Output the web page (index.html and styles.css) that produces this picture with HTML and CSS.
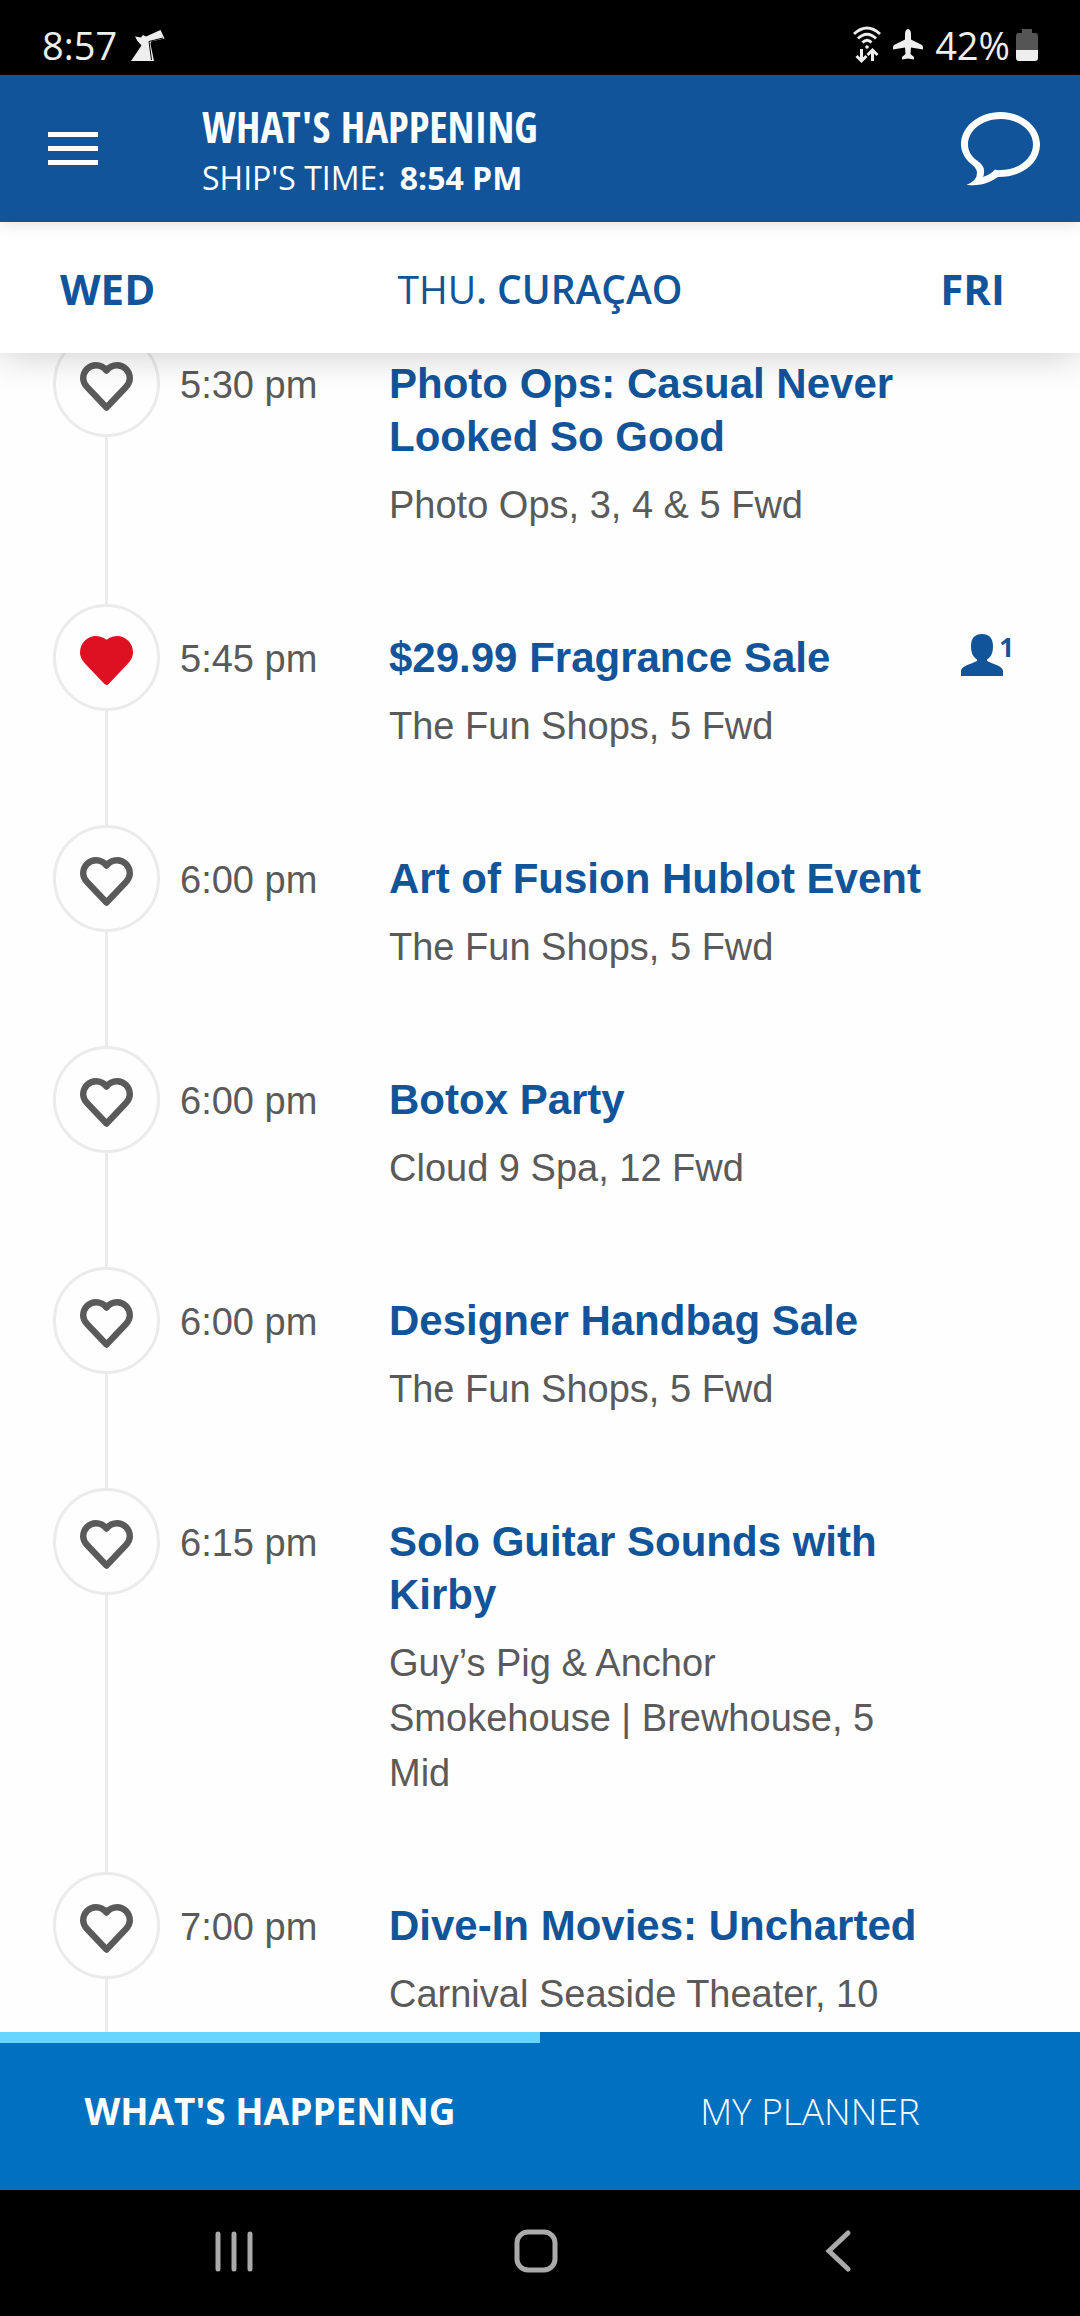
FILE: index.html
```html
<!DOCTYPE html>
<html lang="en">
<head>
<meta charset="utf-8">
<meta name="viewport" content="width=device-width, initial-scale=1">
<title>What's Happening</title>
<link rel="stylesheet" href="styles.css">
</head>
<body>
<svg class="sprite" aria-hidden="true">
  <symbol id="heart" viewBox="0 0 53 49"><path d="M26.500 45.500 7.500 25.500C4.500 22.500 3.200 20 3.200 16.500 3.200 9 9 3.200 16 3.200c4.500 0 8 2 10.500 5.300C29 5.200 32.500 3.200 37 3.200c7 0 12.800 5.800 12.800 13.300 0 3.500-1.300 6-4.300 9Z" stroke-width="6.400" stroke-linejoin="round"/></symbol>
</svg>

<div class="status">
  <div class="status-group status-left">
    <span>8:57</span>
    <svg width="34" height="31" viewBox="0 0 34 31"><path d="M4 6.500 10 7.500 12 5 15 6.500 29.500 0 33.500 8.500 20 11.500 19.500 14 23 31H0L10.500 15.500Q6 11.500 4 6.500Z" fill="#eee"/><path d="M32 8 18 11.500 20.500 30" fill="none" stroke="#000" stroke-width="1"/></svg>
  </div>
  <div class="status-group">
    <svg width="28" height="38" viewBox="0 0 28 38" fill="none" stroke="#eee" stroke-width="3"><path d="M1 8Q14-4 27 8M5 12.500Q14 4 23 12.500M9.500 16.500Q14 12 18.500 16.500"/><circle cx="14" cy="21" r="1.800" fill="#eee" stroke="none"/><path d="M8.500 23v11M3.500 30l5 5 5-5M19.500 35V24M14.500 29l5-5 5 5"/></svg>
    <svg width="32" height="32" viewBox="0 0 32 32" fill="#eee"><path d="M16 0C18 0 19 2.500 19 5V10.500L30 16Q31.500 17 31 20.500L19 18.500 18.500 25 22 28V30.500L16 29.500 10 30.500V28L13.500 25 13 18.500 1 20.500Q.5 17 2 16L13 10.500V5C13 2.500 14 0 16 0Z"/></svg>
    <span class="battery-level">42%<svg width="22" height="32" viewBox="0 0 22 32"><path d="M6 0h10v4h3a3 3 0 0 1 3 3v14H0V7a3 3 0 0 1 3-3h3z" fill="#555"/><path d="M0 21h22v8a3 3 0 0 1-3 3H3a3 3 0 0 1-3-3z" fill="#eee"/></svg></span>
  </div>
</div>

<header class="header">
  <button class="icon-button menu-button" type="button" aria-label="Menu"><svg width="50" height="34" viewBox="0 0 50 34" fill="#fff"><path d="M0 0h50v5H0zM0 14h50v5H0zM0 28h50v5H0z"/></svg></button>
  <div class="heading">
    <h1>WHAT'S HAPPENING</h1>
    <p class="ship-time"><span>SHIP'S TIME:</span><strong>8:54 PM</strong></p>
  </div>
  <button class="icon-button" type="button" aria-label="Chat"><svg width="80" height="74" viewBox="0 0 80 74"><path fill="#fff" fill-rule="evenodd" d="M39.500 0C61 0 79 14.500 79 32.500S62 65 37 65Q28 71 20 72.500 12 74 5.500 72.700 16 69 16 61 16 57 12 53.500C4 47.500 0 40 0 32.500 0 14.500 18 0 39.500 0ZM39.500 7C22 7 7 18 7 32.500 7 39 10.500 44.500 16 48.500Q24 54 23 60 23 63 22 65 30 62 34 57.500 36 58.500 39.500 58C57 58 72 47 72 32.500S57 7 39.500 7Z"/></svg></button>
</header>

<nav class="days" aria-label="Days">
  <a href="#wed">WED</a>
  <a class="current-day" href="#thu" aria-current="date"><span>THU</span>. CURAÇAO</a>
  <a class="next-day" href="#fri">FRI</a>
</nav>

<main class="schedule">
  <ol class="events">
    <li class="event">
      <div class="rail"><button class="favorite" type="button" aria-label="Add to planner"><svg><use href="#heart"/></svg></button></div>
      <time class="time">5:30 pm</time>
      <div class="details"><h2>Photo Ops: Casual Never Looked So Good</h2><p>Photo Ops, 3, 4 &amp; 5 Fwd</p></div>
    </li>
    <li class="event">
      <div class="rail"><button class="favorite selected" type="button" aria-label="Remove from planner"><svg><use href="#heart"/></svg></button></div>
      <time class="time">5:45 pm</time>
      <div class="details"><h2>$29.99 Fragrance Sale</h2><p>The Fun Shops, 5 Fwd</p></div>
      <div class="attendees"><svg width="42" height="42" viewBox="0 0 42 42"><path d="M21 0c7 0 11 4 11 12 0 7-2 11-6 13.500v1.500c6 3 16 5 16 10v5H0v-5c0-5 10-7 16-10v-1.500c-4-2.500-6-6.500-6-13.500C10 4 14 0 21 0Z"/></svg><span>1</span></div>
    </li>
    <li class="event">
      <div class="rail"><button class="favorite" type="button" aria-label="Add to planner"><svg><use href="#heart"/></svg></button></div>
      <time class="time">6:00 pm</time>
      <div class="details"><h2>Art of Fusion Hublot Event</h2><p>The Fun Shops, 5 Fwd</p></div>
    </li>
    <li class="event">
      <div class="rail"><button class="favorite" type="button" aria-label="Add to planner"><svg><use href="#heart"/></svg></button></div>
      <time class="time">6:00 pm</time>
      <div class="details"><h2>Botox Party</h2><p>Cloud 9 Spa, 12 Fwd</p></div>
    </li>
    <li class="event">
      <div class="rail"><button class="favorite" type="button" aria-label="Add to planner"><svg><use href="#heart"/></svg></button></div>
      <time class="time">6:00 pm</time>
      <div class="details"><h2>Designer Handbag Sale</h2><p>The Fun Shops, 5 Fwd</p></div>
    </li>
    <li class="event">
      <div class="rail"><button class="favorite" type="button" aria-label="Add to planner"><svg><use href="#heart"/></svg></button></div>
      <time class="time">6:15 pm</time>
      <div class="details"><h2>Solo Guitar Sounds with Kirby</h2><p>Guy’s Pig &amp; Anchor Smokehouse | Brewhouse, 5 Mid</p></div>
    </li>
    <li class="event">
      <div class="rail"><button class="favorite" type="button" aria-label="Add to planner"><svg><use href="#heart"/></svg></button></div>
      <time class="time">7:00 pm</time>
      <div class="details"><h2>Dive-In Movies: Uncharted</h2><p>Carnival Seaside Theater, 10</p></div>
    </li>
  </ol>
</main>

<nav class="tabs" aria-label="Sections">
  <a class="tab active" href="#happening" aria-current="page">WHAT'S HAPPENING</a>
  <a class="tab" href="#planner">MY PLANNER</a>
</nav>

<div class="system-nav">
  <button class="icon-button" type="button" aria-label="Recent apps"><svg width="44" height="44" viewBox="0 0 44 44" fill="none" stroke="#aaa" stroke-width="5" stroke-linecap="round"><path d="M6 5v35M22 5v35M38 5v35"/></svg></button>
  <button class="icon-button" type="button" aria-label="Home"><svg width="44" height="44" viewBox="0 0 44 44" fill="none" stroke="#aaa" stroke-width="5"><rect x="3" y="3" width="38" height="38" rx="11"/></svg></button>
  <button class="icon-button" type="button" aria-label="Back"><svg width="44" height="44" viewBox="0 0 44 44" fill="none" stroke="#aaa" stroke-width="5" stroke-linecap="round"><path d="M32 4 13 22l19 18"/></svg></button>
</div>
</body>
</html>
```
FILE: styles.css
```css
* { box-sizing: border-box; }

body {
  display: flex;
  flex-direction: column;
  height: 100vh;
  margin: 0;
  background: #fefefe;
  color: #5a5a5a;
  font-family: "Liberation Sans", Arial, sans-serif;
}

h1, h2, p { margin: 0; font-weight: 400; }
a { color: inherit; text-decoration: none; }
svg { display: block; }
.sprite { position: absolute; width: 0; height: 0; }

.icon-button, .favorite {
  display: flex;
  align-items: center;
  justify-content: center;
  padding: 0;
  border: 0;
  background: none;
}

.status {
  display: flex;
  justify-content: space-between;
  padding: 20px 42px 5px;
  background: #000;
  color: #eee;
  font: 38px/50px "Open Sans", sans-serif;
}
.status-group { display: flex; align-items: center; gap: 11px; }
.status-left { gap: 14px; }
.battery-level { display: flex; align-items: center; gap: 6px; }

.header {
  display: flex;
  align-items: center;
  padding: 21px 39px 20px 48px;
  background: #115499;
  color: #fff;
  z-index: 3;
  box-shadow: 0 2px 16px rgba(0, 0, 0, 0.12);
}
.menu-button { width: 154px; justify-content: flex-start; }
.heading { flex: 1; padding-top: 4px; }
h1 {
  font: 800 43px/54px "Open Sans Condensed", "Roboto Condensed", "Liberation Sans Narrow", sans-serif;
}
.ship-time {
  display: flex;
  gap: 14px;
  font: 32px/48px "Open Sans", sans-serif;
}

.days {
  display: grid;
  grid-template-columns: 1fr auto 1fr;
  align-items: center;
  padding: 38px 60px 35px;
  background: #fff;
  color: #115499;
  font: 700 42px/58px "Open Sans", sans-serif;
  z-index: 2;
  box-shadow: 0 2px 36px rgba(0, 0, 0, 0.2);
}
.current-day { font-size: 39px; font-weight: 600; }
.current-day span { font-weight: 400; }
.next-day { padding-right: 15px; text-align: right; }

.schedule { flex: 1; min-height: 0; overflow: hidden; }
.events { margin: -23px 0 0; padding: 0 66px 0 53px; list-style: none; }
.event {
  display: grid;
  grid-template-columns: 107px 209px 1fr 78px;
}
.rail { display: flex; flex-direction: column; align-items: center; }
.rail::after { content: ""; flex: 1; width: 3px; background: #ebebeb; }
.favorite {
  width: 107px;
  height: 107px;
  padding-top: 5px;
  border: 3px solid #ebebeb;
  border-radius: 50%;
}
.favorite svg { width: 53px; height: 49px; fill: none; stroke: #5a5a5a; }
.favorite.selected svg { fill: #dd1122; stroke: #dd1122; }
.time { padding: 28px 0 0 20px; font-size: 38px; line-height: 55px; }
.details { padding: 27px 0 71px 20px; }
h2 { margin-bottom: 15px; color: #115499; font-size: 42px; font-weight: 700; line-height: 53px; }
.details p { font-size: 38px; line-height: 55px; }
.attendees {
  display: flex;
  justify-content: flex-end;
  align-items: flex-start;
  padding-top: 30px;
  color: #115499;
  font: 700 26px/26px "Open Sans", sans-serif;
}
.attendees svg { fill: #115499; }
.attendees span { margin-left: -4px; }

.tabs {
  display: grid;
  grid-template-columns: 1fr 1fr;
  background: #0070c0;
  color: #fff;
  z-index: 2;
}
.tab {
  padding: 38px 0 49px;
  border-top: 11px solid transparent;
  font: 300 37px/60px "Open Sans", sans-serif;
  text-align: center;
}
.tab.active { border-color: #66d6ff; font-weight: 700; }

.system-nav {
  display: flex;
  justify-content: center;
  gap: 258px;
  padding: 39px 8px 43px 0;
  background: #000;
}
```
